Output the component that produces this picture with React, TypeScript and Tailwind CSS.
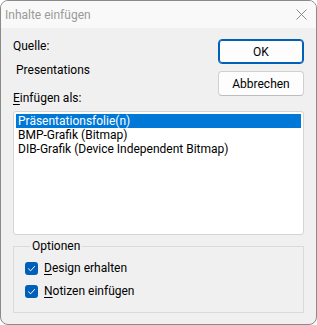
import React from "react";

function Check() {
  return (
    <span className="flex h-[13px] w-[13px] shrink-0 items-center justify-center rounded-[3px] bg-[#005fb8]">
      <svg width="9" height="9" viewBox="0 0 9 9" fill="none">
        <path d="M1.5 4.8 L3.6 6.8 L7.6 2.4" stroke="white" strokeWidth="1" strokeLinecap="round" strokeLinejoin="round" />
      </svg>
    </span>
  );
}

export default function App() {
  const items = [
    "Präsentationsfolie(n)",
    "BMP-Grafik (Bitmap)",
    "DIB-Grafik (Device Independent Bitmap)",
  ];

  return (
    <div
      className="flex h-[325px] w-[317px] flex-col overflow-hidden rounded-[8px] border border-[#8a8a8a] bg-[#f0f0f0] text-[12px] leading-[16px] text-black"
      style={{ fontFamily: 'Roboto, "Noto Sans", sans-serif' }}
    >
      {/* title bar */}
      <div className="flex h-[27px] shrink-0 items-center justify-between bg-[#f9f9f9] pl-[4px] pr-[8px]">
        <span className="text-[12px] text-[#9a9a9a]">Inhalte einfügen</span>
        <svg width="11" height="11" viewBox="0 0 11 11" className="mr-[1px]">
          <path d="M0.5 0.5 L10.5 10.5 M10.5 0.5 L0.5 10.5" stroke="#8a8a8a" strokeWidth="1" />
        </svg>
      </div>

      <div className="flex flex-1 flex-col px-[12px]">
        {/* top */}
        <div className="flex h-[61px] justify-between">
          <div className="flex flex-col pt-[10px]">
            <span>Quelle:</span>
            <span className="mt-[8px] pl-[3px]">Presentations</span>
          </div>
          <div className="flex flex-col gap-[7px] pt-[11px]">
            <button className="h-[25px] w-[86px] shrink-0 rounded-[4px] border border-[#005fb8] bg-[#fdfdfd] shadow-[inset_0_0_0_1px_#005fb8]">
              OK
            </button>
            <button className="h-[25px] w-[86px] shrink-0 rounded-[4px] border border-[#d0d0d0] border-b-[#bdbdbd] bg-[#fdfdfd]">
              Abbrechen
            </button>
          </div>
        </div>

        <span className="mt-[1px]">
          <span className="underline underline-offset-2">E</span>infügen als:
        </span>

        {/* list */}
        <div className="mt-[5px] h-[124px] rounded-[3px] border border-[#d4d4d4] bg-white px-[2px] pt-[2px]">
          {items.map((t, i) => (
            <div
              key={t}
              className={
                i === 0
                  ? "h-[14px] bg-[#0078d7] pl-[2px] leading-[14px] text-white"
                  : "h-[14px] pl-[2px] leading-[14px]"
              }
            >
              {t}
            </div>
          ))}
        </div>

        {/* options */}
        <fieldset className="mt-[3px] h-[75px] border border-[#dadada] px-[11px]">
          <legend className="ml-[5px] px-[2px]">Optionen</legend>
          <div className="mt-[6px] flex items-center gap-[6px]">
            <Check />
            <span>
              <span className="underline underline-offset-2">D</span>esign erhalten
            </span>
          </div>
          <div className="mt-[7px] flex items-center gap-[6px]">
            <Check />
            <span>
              <span className="underline underline-offset-2">N</span>otizen einfügen
            </span>
          </div>
        </fieldset>
      </div>
    </div>
  );
}
